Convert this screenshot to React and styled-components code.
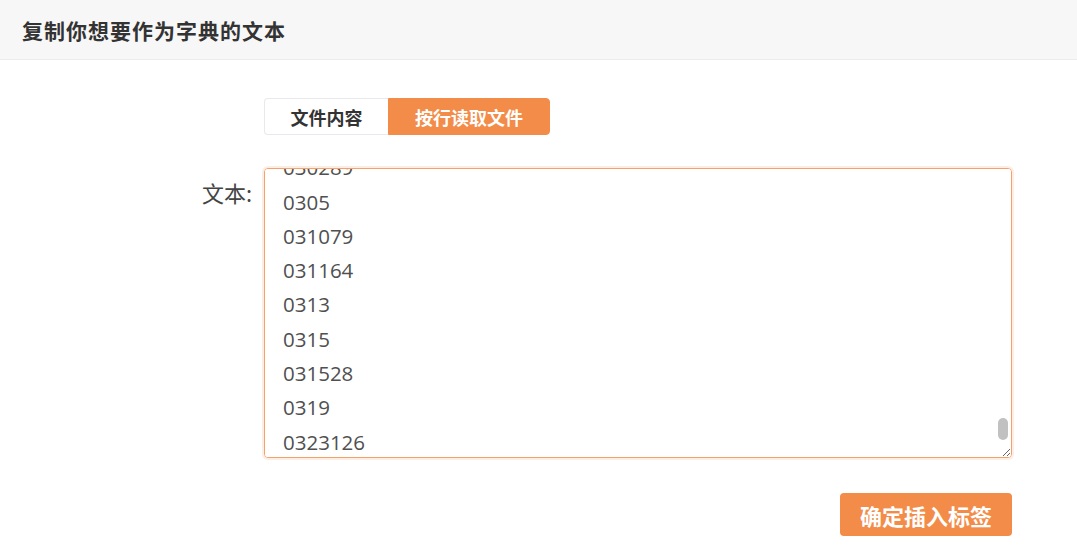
import { useEffect, useRef } from "react";
import styled, { createGlobalStyle } from "styled-components";

const GlobalStyle = createGlobalStyle`
  html, body {
    margin: 0;
    padding: 0;
    background: #fff;
    font-family: "Noto Sans CJK SC", "Noto Sans", sans-serif;
  }
`;

const ORANGE = "#f28c48";

const Page = styled.div`
  width: 1077px;
  min-height: 554px;
  background: #fff;
`;

const Header = styled.div`
  height: 60px;
  box-sizing: border-box;
  display: flex;
  align-items: center;
  padding-left: 22px;
  background: #f7f7f7;
  border-bottom: 1px solid #ececf0;
`;

const Title = styled.h2`
  margin: 0;
  font-size: 21px;
  font-weight: 700;
  color: #333;
  letter-spacing: 1px;
`;

const Form = styled.div`
  display: grid;
  grid-template-columns: 252px 748px;
  column-gap: 12px;
  row-gap: 33px;
  padding-top: 38px;
`;

const Tabs = styled.div`
  grid-column: 2;
  display: flex;
`;

const Tab = styled.button`
  height: 37px;
  padding: 0 ${(p) => (p.$active ? "26px" : "25.5px")};
  font-family: "Noto Sans CJK SC", sans-serif;
  font-size: 18px;
  font-weight: 700;
  cursor: pointer;
  border: 1px solid ${(p) => (p.$active ? ORANGE : "#e8e8ef")};
  background: ${(p) => (p.$active ? ORANGE : "#fff")};
  color: ${(p) => (p.$active ? "#fff" : "#333")};
  border-radius: ${(p) => (p.$first ? "4px 0 0 4px" : "0 4px 4px 0")};
  ${(p) => p.$first && "border-right: none;"}
`;

const Label = styled.label`
  justify-self: end;
  padding-top: 8px;
  font-size: 22px;
  color: #444;
`;

const Field = styled.div`
  position: relative;
  width: 748px;
  height: 290px;
`;

const TextArea = styled.textarea`
  box-sizing: border-box;
  width: 748px;
  height: 290px;
  margin: 0;
  padding: 4px 18px;
  font-family: "Open Sans", "Noto Sans", sans-serif;
  font-size: 20.5px;
  line-height: 34.3px;
  color: #505050;
  border: 1px solid #f5a16c;
  border-radius: 4px;
  box-shadow: 0 0 0 2px rgba(242, 140, 72, 0.15);
  outline: none;
  resize: both;
  scrollbar-width: none;

  &::-webkit-scrollbar {
    display: none;
  }
`;

const ScrollThumb = styled.div`
  position: absolute;
  right: 4px;
  top: 250px;
  width: 10px;
  height: 22px;
  border-radius: 5px;
  background: #c1c1c1;
  pointer-events: none;
`;

const Actions = styled.div`
  grid-column: 2;
  display: flex;
  justify-content: flex-end;
  margin-top: 2px;
`;

const SubmitButton = styled.button`
  height: 43px;
  padding: 0 20px;
  border: none;
  border-radius: 4px;
  background: ${ORANGE};
  color: #fff;
  font-family: "Noto Sans CJK SC", sans-serif;
  font-size: 22px;
  font-weight: 700;
  cursor: pointer;
`;

const visibleCodes = [
  "030289",
  "0305",
  "031079",
  "031164",
  "0313",
  "0315",
  "031528",
  "0319",
  "0323126",
  "0325",
  "032719",
  "0329",
  "033045",
  "0332",
  "0335",
  "033812",
];

// earlier entries, hidden above the scroll position
const earlierCodes = Array.from({ length: 95 }, (_, i) => {
  const head = String(Math.floor(i * 3.2)).padStart(3, "0");
  return i % 3 === 0 ? `0${head}` : `0${head}${(i * 7) % 90 + 10}`;
});

const lines = [...earlierCodes, ...visibleCodes];

export default function App() {
  const areaRef = useRef(null);

  useEffect(() => {
    const el = areaRef.current;
    if (!el) return;
    // put the 030289 line half cut at the top
    el.scrollTop = Math.round(4 + earlierCodes.length * 34.3 + 19);
  }, []);

  return (
    <Page>
      <GlobalStyle />
      <Header>
        <Title>复制你想要作为字典的文本</Title>
      </Header>
      <Form>
        <Tabs>
          <Tab $first>文件内容</Tab>
          <Tab $active>按行读取文件</Tab>
        </Tabs>
        <Label htmlFor="dict-text">文本:</Label>
        <Field>
          <TextArea
            id="dict-text"
            ref={areaRef}
            defaultValue={lines.join("\n")}
            spellCheck={false}
          />
          <ScrollThumb />
        </Field>
        <Actions>
          <SubmitButton>确定插入标签</SubmitButton>
        </Actions>
      </Form>
    </Page>
  );
}
